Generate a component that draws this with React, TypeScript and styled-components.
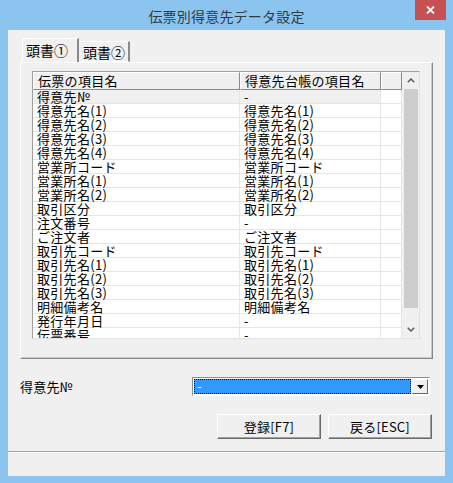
import React from "react";
import styled, { createGlobalStyle } from "styled-components";

const Global = createGlobalStyle`
  html, body { margin: 0; padding: 0; background: #8cc4f0; }
  body { font-family: "Noto Sans CJK JP", "Noto Sans", sans-serif; }
  * { box-sizing: border-box; }
`;

const Frame = styled.div`
  width: 453px;
  height: 483px;
  background: #8cc4f0;
  display: flex;
  flex-direction: column;
  overflow: hidden;
`;

const TitleBar = styled.div`
  height: 30px;
  display: grid;
  grid-template-columns: 1fr auto 1fr;
  align-items: center;
`;

const Title = styled.div`
  grid-column: 2;
  font-size: 14px;
  color: #2e3a44;
  letter-spacing: 0.2px;
  padding-top: 2px;
`;

const CloseButton = styled.div`
  grid-column: 3;
  justify-self: end;
  align-self: start;
  margin-right: 7px;
  width: 31px;
  height: 20px;
  background: #c75050;
  color: #fff;
  display: flex;
  align-items: center;
  justify-content: center;
`;

const Client = styled.div`
  margin: 0 8px 7px 8px;
  height: 446px;
  background: #f0f0f0;
  display: flex;
  flex-direction: column;
`;

const TabStrip = styled.div`
  margin-top: 8px;
  padding-left: 14px;
  height: 24px;
  display: flex;
  align-items: flex-end;
`;

const Tab = styled.div<{ $active?: boolean }>`
  height: ${(p) => (p.$active ? 24 : 21)}px;
  padding: 0 ${(p) => (p.$active ? 9 : 3)}px 0 3px;
  font-size: 14px;
  line-height: ${(p) => (p.$active ? 22 : 20)}px;
  color: #000;
  background: #f0f0f0;
  border-top: 1px solid #fff;
  border-left: 1px solid ${(p) => (p.$active ? "#fff" : "transparent")};
  border-right: 2px solid #8a8a8a;
  ${(p) => (p.$active ? "" : "border-bottom: 1px solid #fff;")}
`;

const TabPanel = styled.div`
  margin-left: 12px;
  width: 413px;
  height: 297px;
  border-top: 1px solid #fff;
  border-left: 1px solid #fff;
  border-right: 1px solid #8a8a8a;
  border-bottom: 1px solid #8a8a8a;
  box-shadow: inset -1px -1px 0 #c8c8c8;
  padding: 8px 0 0 11px;
`;

const ListBox = styled.div`
  width: 388px;
  height: 268px;
  border: 1px solid #a0a0a0;
  border-right-color: #e3e3e3;
  border-bottom-color: #e3e3e3;
  background: #fff;
  display: grid;
  grid-template-columns: 1fr 17px;
  overflow: hidden;
`;

const ListArea = styled.div`
  display: flex;
  flex-direction: column;
  overflow: hidden;
`;

const Row = styled.div<{ $hl?: boolean }>`
  display: grid;
  grid-template-columns: 207px 141px 1fr;
  flex: none;
  background: ${(p) => (p.$hl ? "linear-gradient(to right, #f0f0f0 348px, #fff 348px)" : "transparent")};
`;

const HeadCell = styled.div`
  height: 18px;
  font-size: 13px;
  line-height: 16px;
  padding-left: 4px;
  background: #f0f0f0;
  border-top: 1px solid #fff;
  border-left: 1px solid #fff;
  border-right: 1px solid #8a8a8a;
  border-bottom: 1px solid #8a8a8a;
  white-space: nowrap;
  letter-spacing: 0.3px;
`;

const Cell = styled.div`
  height: 14px;
  font-size: 13px;
  line-height: 14px;
  padding-left: 4px;
  box-shadow: inset -1px -1px 0 #e6e6e6;
  white-space: nowrap;
  letter-spacing: 0.3px;
  color: #000;
`;

const ScrollBar = styled.div`
  background: #f0f0f0;
  display: flex;
  flex-direction: column;
`;

const ScrollArrow = styled.div`
  height: 17px;
  flex: none;
  display: flex;
  align-items: center;
  justify-content: center;
`;

const Thumb = styled.div`
  height: 219px;
  flex: none;
  margin: 0 1px 0 2px;
  background: #cdcdcd;
`;

const Track = styled.div`
  flex: 1;
`;

const FieldRow = styled.div`
  margin-top: 18px;
  height: 19px;
  display: flex;
  align-items: center;
  padding-left: 12px;
  padding-right: 15px;
`;

const Label = styled.div`
  font-size: 13px;
  color: #000;
  letter-spacing: 0.2px;
`;

const Combo = styled.div`
  margin-left: auto;
  width: 238px;
  height: 19px;
  border: 1px solid #8a8a8a;
  border-right-color: #fff;
  border-bottom-color: #fff;
  background: #fff;
  display: flex;
`;

const ComboValue = styled.div`
  flex: 1;
  margin: 1px;
  background: #3399ff;
  outline: 1px dotted #000;
  outline-offset: -1px;
  color: #fff;
  font-size: 13px;
  line-height: 13px;
  padding-left: 3px;
`;

const DropButton = styled.div`
  width: 16px;
  margin: 1px 1px 1px 0;
  background: #f0f0f0;
  border-top: 1px solid #fff;
  border-left: 1px solid #fff;
  border-right: 1px solid #696969;
  border-bottom: 1px solid #696969;
  display: flex;
  align-items: center;
  justify-content: center;
`;

const ButtonRow = styled.div`
  margin-top: 18px;
  display: flex;
  justify-content: flex-end;
  gap: 7px;
  padding-right: 13px;
`;

const Button = styled.div`
  width: 104px;
  height: 25px;
  background: #f0f0f0;
  border-top: 1px solid #fff;
  border-left: 1px solid #fff;
  border-right: 1px solid #696969;
  border-bottom: 1px solid #696969;
  box-shadow: inset -1px -1px 0 #a0a0a0;
  display: flex;
  align-items: center;
  justify-content: center;
  font-size: 13px;
  color: #000;
  letter-spacing: 0.2px;
`;

const StatusBar = styled.div`
  margin-top: auto;
  height: 25px;
  border-top: 1px solid #a0a0a0;
  box-shadow: inset 0 1px 0 #fff;
`;

const rows: [string, string][] = [
  ["得意先№", "-"],
  ["得意先名(1)", "得意先名(1)"],
  ["得意先名(2)", "得意先名(2)"],
  ["得意先名(3)", "得意先名(3)"],
  ["得意先名(4)", "得意先名(4)"],
  ["営業所コード", "営業所コード"],
  ["営業所名(1)", "営業所名(1)"],
  ["営業所名(2)", "営業所名(2)"],
  ["取引区分", "取引区分"],
  ["注文番号", "-"],
  ["ご注文者", "ご注文者"],
  ["取引先コード", "取引先コード"],
  ["取引先名(1)", "取引先名(1)"],
  ["取引先名(2)", "取引先名(2)"],
  ["取引先名(3)", "取引先名(3)"],
  ["明細備考名", "明細備考名"],
  ["発行年月日", "-"],
  ["伝票番号", "-"],
];

const Chevron = ({ up }: { up?: boolean }) => (
  <svg width="8" height="5" viewBox="0 0 8 5">
    <path
      d={up ? "M0.8 4.2 L4 1 L7.2 4.2" : "M0.8 0.8 L4 4 L7.2 0.8"}
      fill="none"
      stroke="#606060"
      strokeWidth="1.6"
    />
  </svg>
);

export default function App() {
  return (
    <>
      <Global />
      <Frame>
        <TitleBar>
          <Title>伝票別得意先データ設定</Title>
          <CloseButton>
            <svg width="9" height="8" viewBox="0 0 9 8">
              <path d="M1 0.5 L8 7.5 M8 0.5 L1 7.5" stroke="#fff" strokeWidth="1.8" />
            </svg>
          </CloseButton>
        </TitleBar>
        <Client>
          <TabStrip>
            <Tab $active>頭書①</Tab>
            <Tab>頭書②</Tab>
          </TabStrip>
          <TabPanel>
            <ListBox>
              <ListArea>
                <Row>
                  <HeadCell>伝票の項目名</HeadCell>
                  <HeadCell>得意先台帳の項目名</HeadCell>
                  <HeadCell />
                </Row>
                {rows.map(([a, b], i) => (
                  <Row key={i} $hl={i === 0}>
                    <Cell>{a}</Cell>
                    <Cell>{b}</Cell>
                    <Cell />
                  </Row>
                ))}
              </ListArea>
              <ScrollBar>
                <ScrollArrow>
                  <Chevron up />
                </ScrollArrow>
                <Thumb />
                <Track />
                <ScrollArrow>
                  <Chevron />
                </ScrollArrow>
              </ScrollBar>
            </ListBox>
          </TabPanel>
          <FieldRow>
            <Label>得意先№</Label>
            <Combo>
              <ComboValue>-</ComboValue>
              <DropButton>
                <svg width="7" height="4" viewBox="0 0 7 4">
                  <path d="M0 0 L7 0 L3.5 4 Z" fill="#000" />
                </svg>
              </DropButton>
            </Combo>
          </FieldRow>
          <ButtonRow>
            <Button>登録[F7]</Button>
            <Button>戻る[ESC]</Button>
          </ButtonRow>
          <StatusBar />
        </Client>
      </Frame>
    </>
  );
}
